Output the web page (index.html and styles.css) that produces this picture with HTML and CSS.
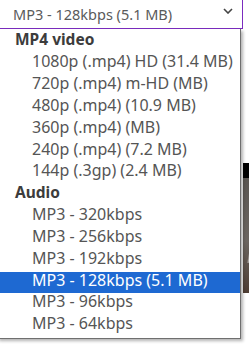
FILE: index.html
```html
<!DOCTYPE html>
<html lang="en">
<head>
  <meta charset="UTF-8">
  <meta name="viewport" content="width=device-width, initial-scale=1">
  <title>Format select</title>
  <link rel="stylesheet" href="styles.css">
</head>
<body>
  <div class="page">
    <div class="select">
      <span class="select-value">MP3 - 128kbps (5.1 MB)</span>
      <svg class="chevron" width="10" height="6" viewBox="0 0 10 6">
        <path d="M1 1 L5 5 L9 1" fill="none" stroke="#444" stroke-width="1.6"/>
      </svg>
    </div>
    <div class="thumb"></div>

    <!-- открытый список -->
    <div class="dropdown">
      <div class="group">MP4 video</div>
      <div class="option">1080p (.mp4) HD (31.4 MB)</div>
      <div class="option">720p (.mp4) m-HD (MB)</div>
      <div class="option">480p (.mp4) (10.9 MB)</div>
      <div class="option">360p (.mp4) (MB)</div>
      <div class="option">240p (.mp4) (7.2 MB)</div>
      <div class="option">144p (.3gp) (2.4 MB)</div>
      <div class="group">Audio</div>
      <div class="option">MP3 - 320kbps</div>
      <div class="option">MP3 - 256kbps</div>
      <div class="option">MP3 - 192kbps</div>
      <div class="option selected">MP3 - 128kbps (5.1 MB)</div>
      <div class="option">MP3 - 96kbps</div>
      <div class="option">MP3 - 64kbps</div>
    </div>
  </div>
</body>
</html>
```

FILE: styles.css
```css
body {
  margin: 0;
  background: #fff;
  font-family: "Noto Sans", "Open Sans", sans-serif;
  overflow: hidden;
}
.page {
  position: relative;
  width: 249px;
  height: 348px;
  overflow: hidden;
}
.select {
  box-sizing: border-box;
  display: flex;
  align-items: center;
  justify-content: space-between;
  margin-left: -10px;
  width: 253px;
  height: 29px;
  padding: 0 9px 1px 23px;
  border-right: 1.5px solid #7b2cbf;
  border-bottom: 1.5px solid #7b2cbf;
  color: #5a5a5a;
  font-size: 14.5px;
}
.chevron {
  margin-top: -6px;
}
.thumb {
  margin: 134px 0 0 243px;
  width: 20px;
  height: 130px;
  background:
    linear-gradient(100deg, transparent 40%, rgba(255,255,255,0.5) 45%, transparent 50%) 0 60px / 20px 40px no-repeat,
    linear-gradient(#000 0 15px, #5a5652 15px, #6b6560 60%, #4e3d33 100%);
}
.dropdown {
  position: absolute;
  top: 29px;
  left: -3px;
  width: 244px;
  box-sizing: border-box;
  padding-top: 2.35px;
  height: 310px;
  background: #fff;
  border-right: 1px solid #6f6f6f;
  border-bottom: 1px solid #6f6f6f;
  box-shadow: 2px 2px 3px rgba(0, 0, 0, 0.3);
}
.group,
.option {
  box-sizing: border-box;
  height: 21.85px;
  white-space: nowrap;
}
.group {
  padding-left: 18px;
  font-size: 15.5px;
  line-height: 16px;
  font-weight: bold;
  color: #3c3c3c;
}
.option {
  padding-left: 35px;
  font-size: 16px;
  line-height: 16px;
  color: #555;
}
.option.selected {
  background: #1e69d2;
  color: #fff;
}
```
